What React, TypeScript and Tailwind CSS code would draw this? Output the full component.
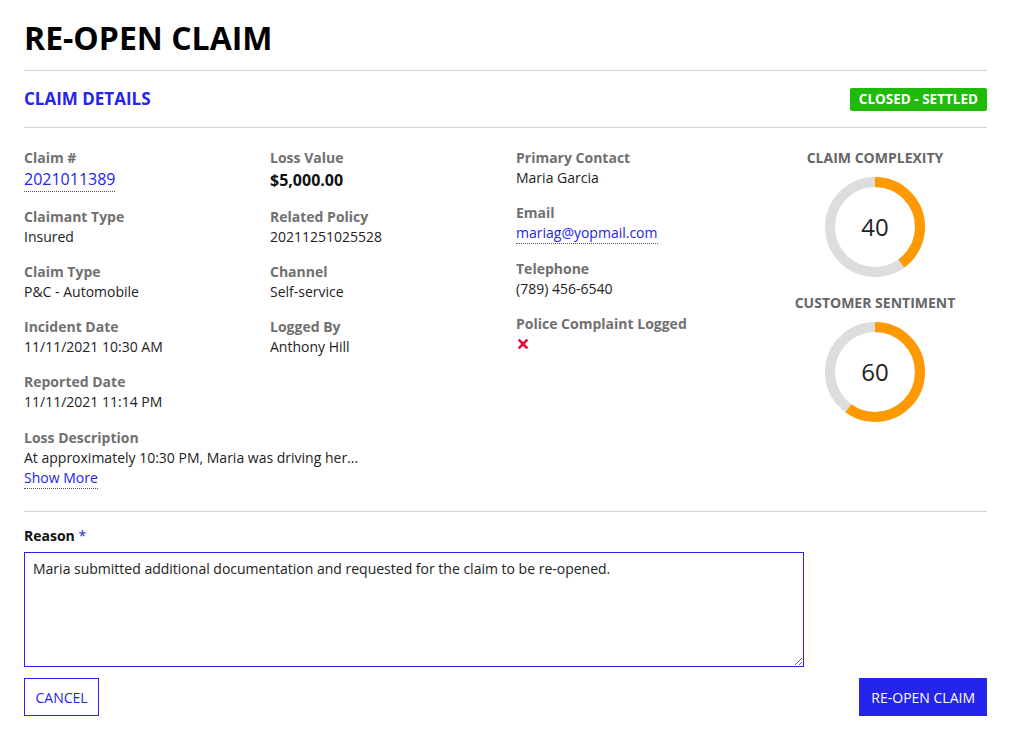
import React from "react";

const BLUE = "#2424ea";

function Field({ label, children, className = "" }: { label: string; children: React.ReactNode; className?: string }) {
  return (
    <div className={"mb-[15px] " + className}>
      <div className="text-[14px] leading-[20px] font-bold text-[#707070]">{label}</div>
      {children}
    </div>
  );
}

function Gauge({ title, value }: { title: string; value: number }) {
  const r = 45;
  const c = 2 * Math.PI * r;
  return (
    <div className="flex flex-col items-center">
      <div className="text-[14px] leading-[20px] font-bold text-[#666]">{title}</div>
      <div className="relative mt-[9px] w-[100px] h-[100px]">
        <svg width="100" height="100" viewBox="0 0 100 100">
          <circle cx="50" cy="50" r={r} fill="none" stroke="#dddddd" strokeWidth="10" />
          <circle
            cx="50"
            cy="50"
            r={r}
            fill="none"
            stroke="#ff9900"
            strokeWidth="10"
            strokeDasharray={`${(c * value) / 100} ${c}`}
            transform="rotate(-90 50 50)"
          />
        </svg>
        <div className="absolute inset-0 flex items-center justify-center text-[24px] text-[#222]">{value}</div>
      </div>
    </div>
  );
}

function LinkVal({ children, size = "text-[14px] leading-[20px]" }: { children: React.ReactNode; size?: string }) {
  return (
    <div className={"flex " + size}>
      <span className="border-b border-dotted border-[#555]" style={{ color: BLUE }}>{children}</span>
    </div>
  );
}

export default function App() {
  const val = "text-[14px] leading-[20px] text-[#222]";
  return (
    <div className="w-[1011px] min-h-[745px] bg-white px-[24px] pt-[18px] pb-[29px]" style={{ fontFamily: '"Open Sans", "Noto Sans", sans-serif' }}>
      <h1 className="text-[32px] leading-[40px] font-bold text-black mb-[12px]">RE-OPEN CLAIM</h1>
      <div className="border-t border-[#d4d4d4]" />
      <div className="h-[56px] flex items-center justify-between">
        <div className="text-[17px] font-bold" style={{ color: BLUE }}>CLAIM DETAILS</div>
        <div className="bg-[#1fba0a] text-white text-[13.5px] font-bold leading-[23px] px-[9px] rounded-[2px]">CLOSED - SETTLED</div>
      </div>
      <div className="border-t border-[#d4d4d4]" />

      <div className="grid grid-cols-[246px_246px_246px_1fr] pt-[20px] pb-[7px]">
        <div>
          <Field label="Claim #">
            <LinkVal size="text-[16px] leading-[23px]">2021011389</LinkVal>
          </Field>
          <Field label="Claimant Type"><div className={val}>Insured</div></Field>
          <Field label="Claim Type"><div className={val}>P&amp;C - Automobile</div></Field>
          <Field label="Incident Date"><div className={val}>11/11/2021 10:30 AM</div></Field>
          <Field label="Reported Date" className="!mb-[16px]"><div className={val}>11/11/2021 11:14 PM</div></Field>
          <Field label="Loss Description">
            <div className={val + " whitespace-nowrap"}>At approximately 10:30 PM, Maria was driving her...</div>
            <LinkVal>Show More</LinkVal>
          </Field>
        </div>
        <div>
          <Field label="Loss Value">
            <div className="text-[16px] leading-[24px] font-bold text-[#111]">$5,000.00</div>
          </Field>
          <Field label="Related Policy"><div className={val}>20211251025528</div></Field>
          <Field label="Channel"><div className={val}>Self-service</div></Field>
          <Field label="Logged By"><div className={val}>Anthony Hill</div></Field>
        </div>
        <div>
          <Field label="Primary Contact"><div className={val}>Maria Garcia</div></Field>
          <Field label="Email">
            <LinkVal>mariag@yopmail.com</LinkVal>
          </Field>
          <Field label="Telephone"><div className={val}>(789) 456-6540</div></Field>
          <Field label="Police Complaint Logged">
            <div className="h-[20px] flex items-center pl-[2px]">
              <svg width="10" height="10" viewBox="0 0 10 10">
                <path d="M1.5 1.5 L8.5 8.5 M8.5 1.5 L1.5 8.5" stroke="#e0103a" strokeWidth="2.6" strokeLinecap="square" />
              </svg>
            </div>
          </Field>
        </div>
        <div className="flex flex-col items-center gap-[16px] pl-[1px]">
          <Gauge title="CLAIM COMPLEXITY" value={40} />
          <Gauge title="CUSTOMER SENTIMENT" value={60} />
        </div>
      </div>

      <div className="border-t border-[#d4d4d4]" />
      <div className="mt-[14px] text-[14px] leading-[20px] font-bold text-[#111]">
        Reason <span className="font-normal" style={{ color: BLUE }}>*</span>
      </div>
      <textarea
        className="mt-[6px] block w-[780px] h-[115px] border border-[#2424ea] px-[8px] py-[6px] text-[14px] leading-[20px] text-[#222] outline-none"
        style={{ fontFamily: '"Open Sans", "Noto Sans", sans-serif' }}
        defaultValue="Maria submitted additional documentation and requested for the claim to be re-opened."
      />
      <div className="mt-[11px] flex justify-between">
        <button className="h-[38px] px-[10.5px] border border-[#2424ea] text-[14px] font-medium bg-white" style={{ color: BLUE }}>CANCEL</button>
        <button className="h-[38px] px-[12px] text-[14px] font-medium text-white bg-[#2424ea]">RE-OPEN CLAIM</button>
      </div>
    </div>
  );
}
